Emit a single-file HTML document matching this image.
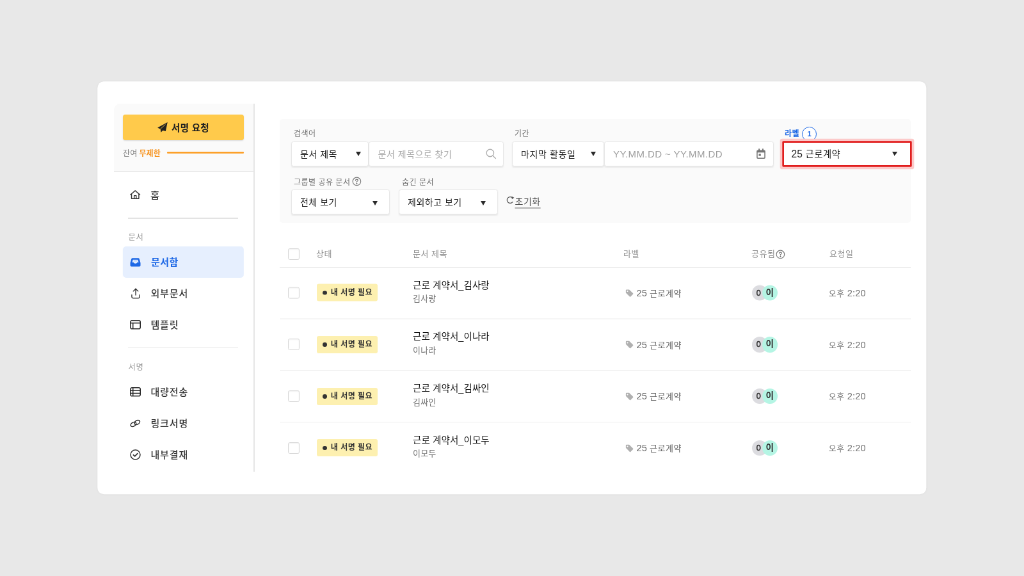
<!DOCTYPE html>
<html lang="ko">
<head>
<meta charset="utf-8">
<title>문서함</title>
<style>
*{box-sizing:border-box;margin:0;padding:0}
html,body{width:1024px;height:576px;overflow:hidden;background:#e8e8e8}
body{font-family:"Liberation Sans","Noto Sans CJK KR",sans-serif;color:#222;letter-spacing:.5px}
#stage{will-change:transform;position:absolute;left:0;top:0;width:1600px;height:900px;transform:scale(.64);transform-origin:0 0}
.abs{position:absolute}
#card{position:absolute;left:152px;top:127px;width:1295px;height:645px;background:#fff;border-radius:10px;transform:translate(.3px,.3px);box-shadow:0 0 4px rgba(0,0,0,.035)}
/* sidebar */
#side{position:absolute;left:178px;top:162px;width:219.6px;height:575px}
#vline{position:absolute;left:218px;top:0;width:1.5px;height:575px;background:#e6e6e6}
#sidehead{position:absolute;left:0;top:0;width:218px;height:106px;background:#fafafa;border-bottom:1.5px solid #dcdcdc;border-top-left-radius:10px}
#reqbtn{position:absolute;left:14px;top:17px;width:189px;height:39.5px;background:#ffca4b;border-radius:4px;box-shadow:0 1px 2px rgba(0,0,0,.13);font-weight:700;font-size:14.5px;letter-spacing:.3px;color:#222;display:flex;align-items:center;justify-content:center;white-space:nowrap}
#reqbtn svg{margin-right:6px;margin-left:0}
.remain{position:absolute;left:14px;top:66px;width:189px;height:20px;font-size:12px;color:#7c7c7c;display:flex;align-items:center;white-space:nowrap;letter-spacing:.15px}
.remain b{color:#f7931e;margin-left:3px}
.remain i{flex:1;height:2px;background:#fd9a1c;margin-left:10px;border-radius:1px;transform:translateY(.55px) scaleY(1.3)}
.sep{position:absolute;left:22px;width:172px;height:1.5px;background:#e3e3e3}
.glabel{position:absolute;left:22.5px;font-size:12.3px;color:#969696;letter-spacing:.7px;line-height:20px;height:20px}
.mi{position:absolute;left:14px;width:189px;height:48px;border-radius:5px;font-size:15px;font-weight:500;color:#333;display:flex;align-items:center;white-space:nowrap}
.mi svg{position:absolute;overflow:visible}
.mi span{position:absolute;left:43.4px;top:0;line-height:48px;letter-spacing:.9px}
.mi.on span{line-height:49px;left:44px;letter-spacing:.5px}
.mi.on{background:#e6effe;color:#1d68e6;font-weight:700}
/* filter */
#filter{position:absolute;left:437px;top:186px;width:986px;height:162px;background:#fafafa;border-radius:5px}
.fl{position:absolute;font-size:12px;color:#6e6e6e;line-height:18px;height:18px;white-space:nowrap}
.box{position:absolute;height:39px;background:#fff;border:1.5px solid #e8e8e8;border-radius:3.5px;font-size:14px;color:#222;line-height:38.2px;white-space:nowrap;box-shadow:0 1.5px 2px rgba(0,0,0,.07)}
.box .t{position:absolute;left:13px;top:0;color:#1c1c1c}
.box .ph{position:absolute;left:13.5px;top:0;color:#adadad}
.caret{position:absolute;top:15.4px;width:0;height:0;border-left:4.9px solid transparent;border-right:4.9px solid transparent;border-top:7px solid #2a2a2a;margin-left:-.1px}
/* table */
#thead{position:absolute;left:437px;top:374.2px;width:986px;height:44px;border-bottom:1px solid #e2e2e2;font-size:13px;color:#949494}
#thead span{position:absolute;top:1px;line-height:43px;white-space:nowrap}
.row{position:absolute;left:437px;width:986px;height:80.6px;border-bottom:1px solid #ececec}
.row.last{border-bottom:none}
.cb{position:absolute;left:13.4px;width:17.8px;height:17.8px;border:1.5px solid #d8d8d8;border-radius:2.6px;background:#fff;box-shadow:inset 0 1px 2px rgba(0,0,0,.06)}
.badge{position:absolute;left:57.6px;top:26.3px;width:95.8px;height:27px;background:#fdf0b0;border-radius:3px;font-size:12px;font-weight:700;color:#333;line-height:26px;white-space:nowrap}
.badge i{position:absolute;left:9.6px;top:10.2px;width:6.8px;height:6.8px;border-radius:50%;background:#333}
.badge span{position:absolute;left:22.2px;top:0}
.ttl{position:absolute;left:208px;top:16.9px;font-size:14.5px;letter-spacing:.1px;line-height:22px;color:#141414;white-space:nowrap}
.sub{position:absolute;left:208px;top:39.3px;font-size:13px;letter-spacing:.2px;line-height:20px;color:#747474;white-space:nowrap}
.lab{position:absolute;left:557.5px;top:0;font-size:13px;line-height:80px;color:#666;white-space:nowrap}
.lab svg{position:absolute;left:-17.4px;top:33.4px;width:13px;height:13px}
.av{position:absolute;top:27.6px;width:24.4px;height:24.4px;border-radius:50%;font-size:13.6px;font-weight:700;color:#333;line-height:24.8px;text-align:center;letter-spacing:0}
.av.a{left:737.6px;background:#dcdce0;font-family:"DejaVu Sans","Liberation Sans",sans-serif;font-size:12.4px;font-weight:400;text-indent:-3.2px;color:#2c2c2c;-webkit-text-stroke:.35px #2c2c2c;line-height:23.6px}
.av.b{left:753.6px;background:#b5f5e4}
.dt{position:absolute;left:857.8px;top:0;font-size:13px;line-height:80px;color:#707070;white-space:nowrap}
.n{font-size:14.6px;letter-spacing:.1px}
</style>
</head>
<body>
<div id="stage">
<div id="card"></div>

<div id="side">
  <div id="vline"></div>
  <div id="sidehead">
    <div id="reqbtn"><svg width="16" height="16" viewBox="0 0 16 16"><path d="M15.7 0.1 L0.1 8.5 L4.7 10.7 L5.3 15.8 L8.6 12.8 L12.8 14.1 Z" fill="#222"/><path d="M4.5 10.6 L12.4 3.4" stroke="#ffca4b" stroke-width=".9"/><path d="M5.6 11.4 L5.5 15 L8.4 12.4" fill="none" stroke="#ffca4b" stroke-width="0"/></svg>서명 요청</div>
    <div class="remain">잔여<b>무제한</b><i></i></div>
  </div>
  <div class="mi" style="top:119px"><svg style="left:11.2px;top:15.7px;width:17px;height:15px" viewBox="0 0 17 15" fill="none" stroke="#333" stroke-width="1.4" stroke-linejoin="round" stroke-linecap="round"><path d="M0.8 7.2 L8.2 0.9 L15.6 7.2"/><path d="M2.5 6 V13.3 H13.9 V6"/><path d="M6.6 13.3 V8.6 H9.8 V13.3"/></svg><span style="transform:scale(1.03,.93);transform-origin:0 46%">홈</span></div>
  <div class="sep" style="top:178px"></div>
  <div class="glabel" style="top:199px">문서</div>
  <div class="mi on" style="top:223px;height:49px"><svg style="left:11.2px;top:18.2px;width:17px;height:14px" viewBox="0 0 17 15" preserveAspectRatio="none"><path d="M4 0.3 H13 Q14.3 0.3 14.7 1.6 L16.5 8.4 V12.6 Q16.5 14.4 14.7 14.4 H2.3 Q0.5 14.4 0.5 12.6 V8.4 L2.3 1.6 Q2.7 0.3 4 0.3 Z" fill="#1d68e6"/><path d="M4.7 2.9 H12.3 L13.6 7.4 H11.4 Q11 9.3 8.5 9.3 Q6 9.3 5.6 7.4 H3.4 Z" fill="#e6effe"/><rect x="5.6" y="4.6" width="5.8" height="1" fill="#1d68e6" opacity=".45"/></svg><span>문서함</span></div>
  <div class="mi" style="top:272.5px"><svg style="left:12px;top:15.5px;width:16px;height:17px" viewBox="0 0 16 17" fill="none" stroke="#333" stroke-width="1.35" stroke-linecap="round" stroke-linejoin="round"><path d="M8 1.2 V11"/><path d="M4.3 4.9 L8 1.2 L11.7 4.9"/><path d="M1.9 10.6 V13.6 Q1.9 15.8 4.1 15.8 H11.9 Q14.1 15.8 14.1 13.6 V10.6"/></svg><span>외부문서</span></div>
  <div class="mi" style="top:321.5px"><svg style="left:11.2px;top:16.3px;width:17px;height:15px" viewBox="0 0 17 15" fill="none" stroke="#2a2a2a" stroke-width="1.55" stroke-linejoin="round"><rect x=".8" y=".8" width="15.4" height="13" rx="2.3"/><path d="M.8 4.7 H16.2"/><path d="M4.7 4.7 V13.8"/></svg><span>템플릿</span></div>
  <div class="sep" style="top:380.5px"></div>
  <div class="glabel" style="top:402px">서명</div>
  <div class="mi" style="top:426.5px"><svg style="left:11.2px;top:16.6px;width:17px;height:15px" viewBox="0 0 17 15" fill="none" stroke="#2a2a2a" stroke-width="1.55" stroke-linejoin="round"><rect x=".8" y=".8" width="15.4" height="13" rx="2.3"/><path d="M.8 5.1 H16.2"/><path d="M.8 9.5 H16.2"/><path d="M4.7 .8 V13.8"/></svg><span>대량전송</span></div>
  <div class="mi" style="top:475.5px"><svg style="left:11.2px;top:16.6px;width:17px;height:15px" viewBox="0 0 17 15" fill="none" stroke="#2a2a2a" stroke-width="1.55"><ellipse cx="5.4" cy="9" rx="4.6" ry="3" transform="rotate(-30 5.4 9)"/><ellipse cx="11.2" cy="6.05" rx="4.6" ry="3" transform="rotate(-30 11.2 6.05)"/></svg><span>링크서명</span></div>
  <div class="mi" style="top:524.5px"><svg style="left:11.2px;top:15.5px;width:17px;height:17px" viewBox="0 0 17 17" fill="none" stroke="#333" stroke-linecap="round" stroke-linejoin="round"><circle cx="8.5" cy="8.5" r="7.5" stroke-width="1.5"/><path d="M5.4 8.8 L7.6 10.9 L11.8 6.6" stroke-width="1.8"/></svg><span>내부결재</span></div>
</div>

<div id="filter">
  <div class="fl" style="left:22px;top:13.8px">검색어</div>
  <div class="box" style="left:18px;top:35px;width:121.3px"><span class="t">문서 제목</span><i class="caret" style="left:99.8px"></i></div>
  <div class="box" style="left:139px;top:35px;width:211px"><span class="ph">문서 제목으로 찾기</span><svg class="abs" style="left:182px;top:10px" width="17" height="17" viewBox="0 0 17 17" fill="none" stroke="#b0b0b0" stroke-width="1.4" stroke-linecap="round"><circle cx="6.8" cy="7" r="5.7"/><path d="M11 11.2 L15.4 15.6"/></svg></div>
  <div class="fl" style="left:367px;top:13.8px">기간</div>
  <div class="box" style="left:363px;top:35px;width:143.7px"><span class="t" style="letter-spacing:.6px">마지막 활동일</span><i class="caret" style="left:122.5px"></i></div>
  <div class="box" style="left:507.4px;top:35px;width:264.6px"><span class="ph" style="left:12.6px;font-size:15px;letter-spacing:.42px;color:#9e9e9e">YY.MM.DD ~ YY.MM.DD</span><svg class="abs" style="left:236.2px;top:9.8px" width="14" height="16" viewBox="0 0 14 16"><rect x="3.1" y=".3" width="2" height="3.2" fill="#757575"/><rect x="8.9" y=".3" width="2" height="3.2" fill="#757575"/><rect x=".95" y="3.2" width="12.1" height="12" rx="1.1" fill="none" stroke="#757575" stroke-width="1.5"/><rect x=".95" y="3" width="12.1" height="3.3" fill="#757575"/><rect x="3.5" y="8.3" width="3.3" height="3.3" fill="#757575"/></svg></div>
  <div class="fl" style="left:789px;top:14.3px;color:#1d68e6;font-weight:700">라벨</div>
  <div class="abs" style="left:816.4px;top:12.3px;width:23px;height:23px;border:1.5px solid #1d68e6;border-radius:50%;background:#fff;color:#1d68e6;font-size:11px;font-weight:700;line-height:20px;text-align:center">1</div>
  <div class="box" style="left:786px;top:35px;width:201px;height:39px;border:2.4px solid #e11d1d;border-radius:1px;box-shadow:0 0 0 .7px #e11d1d,0 0 0 4.3px #fccaca;line-height:35.6px"><span class="t" style="left:11.6px;font-size:14.3px"><span class="n" style="font-size:15.6px">25</span> 근로계약</span><i class="caret" style="left:168.8px;top:14px"></i></div>

  <div class="fl" style="left:22px;top:89.6px">그룹별 공유 문서</div>
  <svg class="abs" style="left:113.2px;top:90px" width="14.8" height="14.8" viewBox="0 0 14 14" fill="none" stroke="#777" stroke-width="1.1" stroke-linecap="round"><circle cx="7" cy="7" r="5.9"/><path d="M5.2 5.6 Q5.2 3.9 7 3.9 Q8.8 3.9 8.8 5.4 Q8.8 6.4 7 7.3 V8.2"/><circle cx="7" cy="10.2" r=".5" fill="#777"/></svg>
  <div class="box" style="left:18px;top:110px;width:154px;line-height:39.8px"><span class="t">전체 보기</span><i class="caret" style="left:125.7px;top:17px"></i></div>
  <div class="fl" style="left:191px;top:89.6px">숨긴 문서</div>
  <div class="box" style="left:186px;top:110px;width:155px;line-height:39.8px"><span class="t">제외하고 보기</span><i class="caret" style="left:126.7px;top:17px"></i></div>
  <svg class="abs" style="left:353.9px;top:120.3px" width="13" height="13" viewBox="0 0 13 13"><path d="M9.95 9.65 A4.9 4.9 0 1 1 9.6 3" fill="none" stroke="#555" stroke-width="1.25" stroke-linecap="round"/><path d="M8.3 0.8 L12.4 2.7 L8.9 5.3 Z" fill="#555"/></svg>
  <div class="abs" style="left:367.5px;top:117.6px;font-size:14px;line-height:22px;color:#555;text-decoration:underline;text-decoration-color:#b4b4b4;text-decoration-thickness:1.6px;text-underline-offset:3.6px;white-space:nowrap">초기화</div>
</div>

<div id="thead">
  <i class="cb" style="top:14px"></i>
  <span style="left:57px">상태</span>
  <span style="left:208px">문서 제목</span>
  <span style="left:537px">라벨</span>
  <span style="left:737px">공유됨</span>
  <svg class="abs" style="left:775px;top:15.4px" width="14.8" height="14.8" viewBox="0 0 14 14" fill="none" stroke="#777" stroke-width="1.1" stroke-linecap="round"><circle cx="7" cy="7" r="5.9"/><path d="M5.2 5.6 Q5.2 3.9 7 3.9 Q8.8 3.9 8.8 5.4 Q8.8 6.4 7 7.3 V8.2"/><circle cx="7" cy="10.2" r=".5" fill="#777"/></svg>
  <span style="left:859px">요청일</span>
</div>

<div class="row" style="top:418.2px;height:80.4px;transform:translateY(-.45px)"><i class="cb" style="top:30.9px"></i><div class="badge"><i></i><span>내 서명 필요</span></div><div class="ttl">근로 계약서_김사랑</div><div class="sub">김사랑</div><div class="lab"><svg viewBox="0 0 12 12"><path d="M0.8 1.8 Q0.8 0.8 1.8 0.8 H5.6 L11.2 6.2 Q11.7 6.8 11.2 7.4 L7.6 11 Q7 11.5 6.4 11 L0.8 5.4 Z" fill="#b0b0b0"/><circle cx="3.2" cy="3.2" r="1" fill="#fff"/></svg><span class="n">25</span> 근로계약</div><div class="av a">0</div><div class="av b">이</div><div class="dt">오후 <span class="n">2:20</span></div></div>
<div class="row" style="top:498.6px;height:80.7px"><i class="cb" style="top:30.9px"></i><div class="badge"><i></i><span>내 서명 필요</span></div><div class="ttl">근로 계약서_이나라</div><div class="sub">이나라</div><div class="lab"><svg viewBox="0 0 12 12"><path d="M0.8 1.8 Q0.8 0.8 1.8 0.8 H5.6 L11.2 6.2 Q11.7 6.8 11.2 7.4 L7.6 11 Q7 11.5 6.4 11 L0.8 5.4 Z" fill="#b0b0b0"/><circle cx="3.2" cy="3.2" r="1" fill="#fff"/></svg><span class="n">25</span> 근로계약</div><div class="av a">0</div><div class="av b">이</div><div class="dt">오후 <span class="n">2:20</span></div></div>
<div class="row" style="top:579.3px;height:80.9px"><i class="cb" style="top:30.9px"></i><div class="badge"><i></i><span>내 서명 필요</span></div><div class="ttl">근로 계약서_김싸인</div><div class="sub">김싸인</div><div class="lab"><svg viewBox="0 0 12 12"><path d="M0.8 1.8 Q0.8 0.8 1.8 0.8 H5.6 L11.2 6.2 Q11.7 6.8 11.2 7.4 L7.6 11 Q7 11.5 6.4 11 L0.8 5.4 Z" fill="#b0b0b0"/><circle cx="3.2" cy="3.2" r="1" fill="#fff"/></svg><span class="n">25</span> 근로계약</div><div class="av a">0</div><div class="av b">이</div><div class="dt">오후 <span class="n">2:20</span></div></div>
<div class="row last" style="top:660.2px;height:80.6px"><i class="cb" style="top:30.9px"></i><div class="badge"><i></i><span>내 서명 필요</span></div><div class="ttl">근로 계약서_이모두</div><div class="sub">이모두</div><div class="lab"><svg viewBox="0 0 12 12"><path d="M0.8 1.8 Q0.8 0.8 1.8 0.8 H5.6 L11.2 6.2 Q11.7 6.8 11.2 7.4 L7.6 11 Q7 11.5 6.4 11 L0.8 5.4 Z" fill="#b0b0b0"/><circle cx="3.2" cy="3.2" r="1" fill="#fff"/></svg><span class="n">25</span> 근로계약</div><div class="av a">0</div><div class="av b">이</div><div class="dt">오후 <span class="n">2:20</span></div></div>

</div>
</body>
</html>
